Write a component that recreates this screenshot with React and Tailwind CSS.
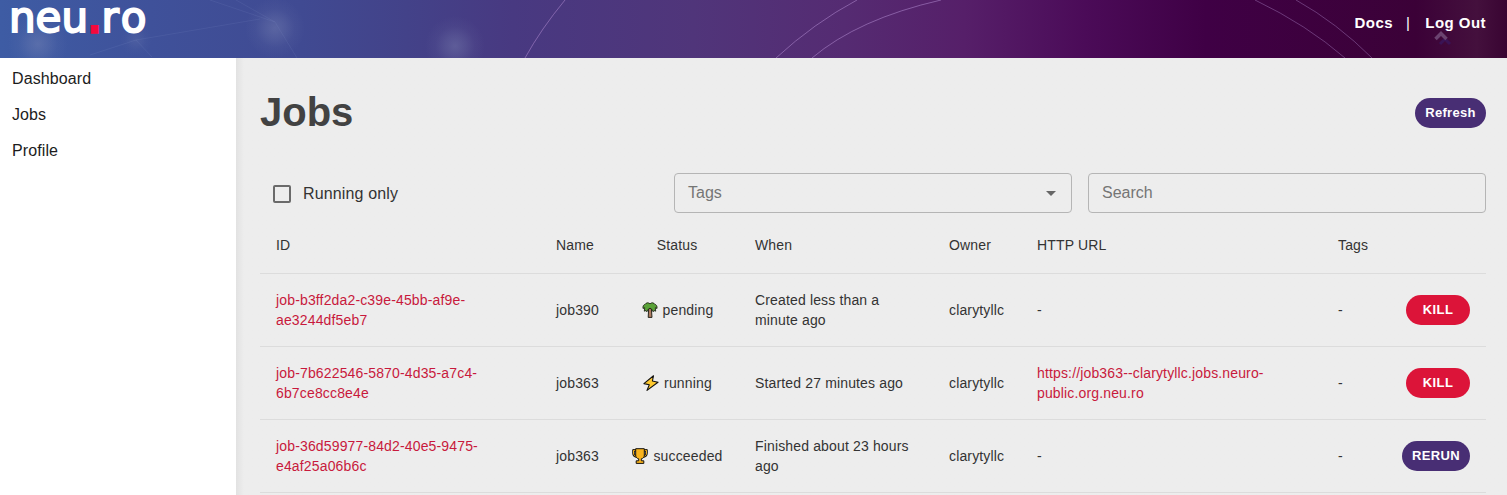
const jobs = [
  { id: "job-b3ff2da2-c39e-45bb-af9e-ae3244df5eb7", name: "job390", status: "pending", when: "Created less than a minute ago", url: "-", action: "KILL" },
  { id: "job-7b622546-5870-4d35-a7c4-6b7ce8cc8e4e", name: "job363", status: "running", when: "Started 27 minutes ago", url: "https://job363--clarytyllc.jobs.neuro-public.org.neu.ro", action: "KILL" },
  { id: "job-36d59977-84d2-40e5-9475-e4af25a06b6c", name: "job363", status: "succeeded", when: "Finished about 23 hours ago", url: "-", action: "RERUN" },
];

function StatusIcon({ status }) {
  if (status === "pending")
    return (
      <svg className="size-4 shrink-0" viewBox="0 0 16 16" stroke="#16180f" strokeWidth="1" strokeLinejoin="round">
        <path d="M6.700 6h2.600l.7 9.400H6.200z" fill="#b07d62" strokeWidth=".9" />
        <path d="M8 1.800C6.400.3 4.200.5 3.400 2.200 1.500 2.600.6 4.400 1 6.500l1.700-.8-.4 3.500 1.800-.7.7 1.300L6.500 7 8 6.200 9.500 7l1.700 2.800.7-1.300 1.800.7-.4-3.500 1.700.8c.4-2.100-.5-3.900-2.400-4.300C11.800.5 9.600.3 8 1.800z" fill="#5aa238" strokeWidth=".8" />
      </svg>
    );
  if (status === "running")
    return (
      <svg className="size-4 shrink-0" viewBox="0 0 16 16" stroke="#111" strokeWidth="1.1" strokeLinejoin="round">
        <path d="M10.500.8.900 8.600l5.400 1.200L4 15.400l11-8.200-5.600-1.200z" fill="#fdc82f" />
      </svg>
    );
  return (
    <svg className="size-4 shrink-0" viewBox="0 0 16 16" strokeLinejoin="round">
      <path d="M4 2.300H1.500V5c0 2.500 1.500 3.500 4 3.700M12 2.300h2.500V5c0 2.500-1.500 3.500-4 3.700" fill="none" stroke="#111" strokeWidth="2.600" />
      <path d="M4 2.300H1.500V5c0 2.500 1.500 3.500 4 3.700M12 2.300h2.500V5c0 2.500-1.500 3.500-4 3.700" fill="none" stroke="#f5b21b" strokeWidth="1" />
      <path d="M3.700.7h8.600v6.500c0 2-1.300 3.300-3 3.600v2h2.500v2.600H4.200v-2.600h2.500v-2c-1.700-.3-3-1.600-3-3.600z" fill="#f9b31c" stroke="#111" />
    </svg>
  );
}

function HeaderArt() {
  return (
    <svg className="absolute inset-0 h-full w-full" viewBox="0 0 1507 58" preserveAspectRatio="none">
      <defs>
        <linearGradient id="sky" x1="0" x2="1" y1="0" y2="0">
          <stop offset="0" stopColor="#3e5ca4" />
          <stop offset=".1" stopColor="#3f519a" />
          <stop offset=".2" stopColor="#404a92" />
          <stop offset=".27" stopColor="#434289" />
          <stop offset=".34" stopColor="#483981" />
          <stop offset=".46" stopColor="#50357a" />
          <stop offset=".56" stopColor="#552b72" />
          <stop offset=".64" stopColor="#561f69" />
          <stop offset=".72" stopColor="#4b0b58" />
          <stop offset=".8" stopColor="#3f0045" />
          <stop offset=".94" stopColor="#3b0137" />
          <stop offset=".98" stopColor="#44103d" />
          <stop offset="1" stopColor="#390432" />
        </linearGradient>
        <radialGradient id="glow">
          <stop offset="0" stopColor="#8992bb" stopOpacity=".45" />
          <stop offset=".35" stopColor="#8992bb" stopOpacity=".27" />
          <stop offset=".65" stopColor="#8992bb" stopOpacity=".09" />
          <stop offset="1" stopColor="#8992bb" stopOpacity="0" />
        </radialGradient>
      </defs>
      <rect width="1507" height="58" fill="url(#sky)" />
      <circle cx="38" cy="44" r="30" fill="url(#glow)" opacity=".8" />
      <circle cx="275" cy="28" r="30" fill="url(#glow)" opacity=".8" />
      <circle cx="455" cy="46" r="30" fill="url(#glow)" opacity=".8" />
      <circle cx="136" cy="40" r="16" fill="url(#glow)" opacity=".4" />
      <path d="M90 55 136 40 260 19M136 40l16 17M210 0l65 22 22 36M275 22 236 0" fill="none" stroke="#8b9bd0" strokeOpacity=".13" />
      <g fill="none" stroke="#b18bcf" strokeOpacity=".55">
        <path d="M525 58Q541 29 565 0" />
        <path d="M776 58Q814 23 857 0" />
        <path d="M812 58Q858 19 941 0" />
        <path d="M1255 0Q1307 25 1345 58" strokeOpacity=".4" />
        <path d="M1296 0Q1337 23 1372 58" strokeOpacity=".4" />
      </g>
      <path d="m1440 44 5-5 5 5" fill="none" stroke="#3a1355" strokeWidth="3" />
      <path d="m1435.500 39 5.500-5.500 5.500 5.500" fill="none" stroke="#6b4370" strokeWidth="3.500" />
    </svg>
  );
}

function Header() {
  return (
    <header className="relative h-[58px] shrink-0 overflow-hidden">
      <HeaderArt />
      <div className="relative flex h-full justify-between pl-[9px] pr-[21px] text-white">
        <div className="-mt-[8px] whitespace-nowrap font-['DejaVu_Sans'] text-[42px] leading-[52px] [-webkit-text-stroke:2px_white]">
          neu<span className="text-[#f5093c] [-webkit-text-stroke:3.5px_#f5093c]">.</span>
          <span className="tracking-[2px]">r</span>o
        </div>
        <nav className="flex h-[46px] items-center text-[15px] font-bold tracking-[0.45px]">
          <a>Docs</a>
          <span className="ml-[13px] mr-[15px] font-normal">|</span>
          <a>Log Out</a>
        </nav>
      </div>
    </header>
  );
}

const cell = "px-4 py-4 align-middle";

export default function App() {
  return (
    <div className="flex h-[495px] w-[1507px] flex-col overflow-hidden bg-[#ededed] font-['Liberation_Sans',sans-serif] text-[#333]">
      <Header />
      <div className="flex min-h-0 flex-1">
        <aside className="flex w-[236px] shrink-0 flex-col gap-3 bg-white pl-3 pt-[9px] text-base tracking-[0.1px] text-[#1c1c1c]">
          <a>Dashboard</a>
          <a>Jobs</a>
          <a>Profile</a>
        </aside>
        <main className="flex-1 bg-linear-to-r from-[#e2e2e2] to-[#ededed] to-[8px] pl-6 pr-[21px]">
          <div className="flex h-[110px] items-center justify-between">
            <h1 className="-mt-[3px] text-[40px] font-bold text-[#424242]">Jobs</h1>
            <button className="h-[30px] w-[71px] rounded-full bg-[#482e74] text-[13px] font-bold tracking-[0.3px] text-white">Refresh</button>
          </div>
          <div className="mt-[5px] flex h-10 gap-4">
            <label className="flex w-[398px] items-center gap-3 pl-[13px] pt-[2px] text-base tracking-[0.15px]">
              <span className="size-[18px] rounded-[2px] border-2 border-[#6a6a6a]" />
              Running only
            </label>
            <div className="flex w-[398px] items-center justify-between rounded border border-[#b5b5b5] pl-[13px] pr-[15px] text-base text-[#757575]">
              Tags
              <svg className="h-[5px] w-[10px]" viewBox="0 0 10 5"><path d="m0 0 5 5 5-5z" fill="#666" /></svg>
            </div>
            <div className="flex w-[398px] items-center rounded border border-[#b5b5b5] pl-[13px] text-base text-[#757575]">Search</div>
          </div>
          <table className="mt-1 w-[1226px] table-fixed border-collapse text-left text-sm tracking-[0.15px]">
            <colgroup>
              <col className="w-[280px]" /><col className="w-[75px]" /><col className="w-[124px]" /><col className="w-[194px]" />
              <col className="w-[88px]" /><col className="w-[301px]" /><col className="w-[64px]" /><col className="w-[100px]" />
            </colgroup>
            <thead>
              <tr className="h-[56px] border-b border-[#dcdcdc]">
                {["ID", "Name", "Status", "When", "Owner", "HTTP URL", "Tags", ""].map((h) => (
                  <th key={h} className={h === "Status" ? "px-4 text-center font-normal" : "px-4 font-normal"}>{h}</th>
                ))}
              </tr>
            </thead>
            <tbody>
              {jobs.map((j) => (
                <tr key={j.id} className="h-[73px] border-b border-[#dcdcdc]">
                  <td className="py-4 pl-4 pr-14 text-[#c8193c]">{j.id}</td>
                  <td className="pl-4">{j.name}</td>
                  <td>
                    <div className="flex items-center justify-center gap-[5px] pl-px"><StatusIcon status={j.status} />{j.status}</div>
                  </td>
                  <td className={cell}>{j.when}</td>
                  <td className="pl-4">clarytyllc</td>
                  <td className={j.url === "-" ? cell : "py-4 pl-4 pr-12 text-[#c8193c]"}>{j.url}</td>
                  <td className={cell}>-</td>
                  <td className="pr-4 text-right">
                    <button className={j.action === "KILL" ? "h-[30px] w-16 rounded-full bg-[#dc1439] pt-px text-[13px] font-bold tracking-[0.4px] text-white" : "h-[30px] w-[68px] rounded-full bg-[#482e74] pt-px text-[13px] font-bold tracking-[0.4px] text-white"}>{j.action}</button>
                  </td>
                </tr>
              ))}
            </tbody>
          </table>
        </main>
      </div>
    </div>
  );
}
